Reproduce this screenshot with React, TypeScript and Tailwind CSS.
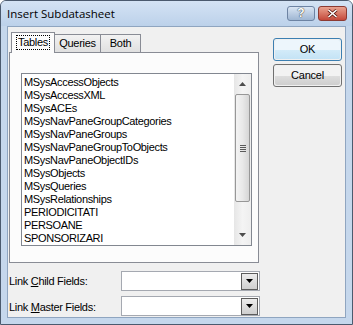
import React from "react";

const items = [
  "MSysAccessObjects",
  "MSysAccessXML",
  "MSysACEs",
  "MSysNavPaneGroupCategories",
  "MSysNavPaneGroups",
  "MSysNavPaneGroupToObjects",
  "MSysNavPaneObjectIDs",
  "MSysObjects",
  "MSysQueries",
  "MSysRelationships",
  "PERIODICITATI",
  "PERSOANE",
  "SPONSORIZARI",
];

function DropBtn() {
  return (
    <div className="w-[17px] h-[17px] border border-[#5c5c5c] bg-gradient-to-b from-[#ececec] to-[#cfcfcf] flex items-center justify-center">
      <svg width="7" height="4" viewBox="0 0 7 4">
        <path d="M0 0h7L3.5 4z" fill="#000" />
      </svg>
    </div>
  );
}

function Combo() {
  return (
    <div className="w-[139px] h-[20px] bg-white border border-[#a5a9b1] flex items-center justify-end pr-[1px]">
      <DropBtn />
    </div>
  );
}

function VButton({ label, def }: { label: string; def?: boolean }) {
  return (
    <div
      className={`w-[69px] h-[23px] rounded-[3px] border ${
        def ? "border-[#3c7fb1]" : "border-[#707070]"
      } p-[1px]`}
    >
      <div
        className={`w-full h-full rounded-[2px] flex flex-col overflow-hidden ${
          def ? "shadow-[inset_0_0_0_1px_#c8e8f8]" : "shadow-[inset_0_0_0_1px_#fcfcfc]"
        } relative`}
      >
        <div className={`h-1/2 ${def ? "bg-[#edf6fc]" : "bg-[#f2f2f2]"}`} />
        <div className={`h-1/2 ${def ? "bg-gradient-to-b from-[#d3ebf9] to-[#c4e3f5]" : "bg-gradient-to-b from-[#dddddd] to-[#cfcfcf]"}`} />
        <div className="absolute inset-0 flex items-center justify-center text-[11px] text-black tracking-[-0.2px]">
          {label}
        </div>
      </div>
    </div>
  );
}

export default function App() {
  return (
    <div
      className="w-[353px] h-[325px] bg-[#c5d7ec] border border-[#4b5a6e] rounded-t-[6px] flex flex-col overflow-hidden"
      style={{ fontFamily: "Tahoma, 'Liberation Sans', Arial, sans-serif" }}
    >
      {/* Title bar */}
      <div className="h-[25px] flex items-center pl-[6px] pr-[5px] bg-gradient-to-b from-[#d4e3f4] to-[#bcd1ea]">
        <span
          className="text-[11.5px] text-black flex-1 mt-[1px]"
          style={{ fontFamily: "'Open Sans', 'Liberation Sans', sans-serif" }}
        >
          Insert Subdatasheet
        </span>
        <div className="flex gap-[3px] -mt-[1px]">
          <div
            className="w-[28px] h-[15px] rounded-[3px] border border-[#6d83a3] bg-gradient-to-b from-[#d9e5f3] to-[#9fb6d3] flex items-center justify-center text-white text-[12px] font-bold leading-none"
            style={{ textShadow: "0 0 1px #333, 0 0 1px #333" }}
          >
            ?
          </div>
          <div className="w-[29px] h-[15px] rounded-[3px] border border-[#8c3a32] bg-gradient-to-b from-[#e8a290] to-[#c4473a] flex items-center justify-center">
            <svg width="11" height="9" viewBox="0 0 11 9">
              <path d="M1.5 1L9.5 8M9.5 1L1.5 8" stroke="#5a1a14" strokeWidth="3" />
              <path d="M1.5 1L9.5 8M9.5 1L1.5 8" stroke="#fff" strokeWidth="1.6" />
            </svg>
          </div>
        </div>
      </div>

      {/* Client */}
      <div className="flex-1 mx-[6px] mb-[6px] bg-[#f0f0f0] border border-[#8fa5c0] flex">
        {/* Left column */}
        <div className="w-[253px] flex flex-col pl-[1px] pt-[5px]">
          {/* Tabs */}
          <div className="flex items-end h-[20px] pl-[2px] relative z-10">
            <div className="w-[44px] border border-b-0 border-[#898c95] bg-[#fcfcfc] flex items-start justify-center pt-[2px] -mr-[1px] relative -mb-[1px] h-[21px]">
              <span className="text-[11px] text-black border border-dotted border-black px-[1px] leading-[13px] tracking-[-0.3px]">
                Tables
              </span>
            </div>
            <div className="h-[18px] w-[47px] border border-b-0 border-[#898c95] bg-gradient-to-b from-[#f2f2f2] to-[#e0e0e0] flex items-center justify-center text-[11px] text-black tracking-[-0.3px]">
              Queries
            </div>
            <div className="h-[18px] w-[40px] border border-b-0 border-l-0 border-[#898c95] bg-gradient-to-b from-[#f2f2f2] to-[#e0e0e0] flex items-center justify-center text-[11px] text-black tracking-[-0.3px]">
              Both
            </div>
          </div>
          {/* Panel */}
          <div className="w-[250px] h-[211px] border border-[#898c95] bg-[#fcfcfc] pl-[11px] pt-[20px]">
            <div className="w-[231px] h-[173px] border border-[#828790] bg-white flex">
              <div className="flex-1 pt-[2px] pl-[2px] overflow-hidden">
                {items.map((t) => (
                  <div
                    key={t}
                    className="h-[13px] leading-[13px] text-[11px] text-black whitespace-nowrap tracking-[-0.35px]"
                  >
                    {t}
                  </div>
                ))}
              </div>
              {/* Scrollbar */}
              <div className="w-[17px] h-full bg-gradient-to-r from-[#e6e6e6] via-[#f4f4f4] to-[#eeeeee] flex flex-col items-center">
                <div className="h-[20px] w-full flex items-center justify-center">
                  <svg width="7" height="4" viewBox="0 0 7 4">
                    <path d="M0 4h7L3.5 0z" fill="#4d4d4d" />
                  </svg>
                </div>
                <div className="w-[15px] h-[108px] rounded-[2px] border border-[#979797] bg-gradient-to-r from-[#f3f3f3] via-[#e9e9e9] to-[#d6d6d6] flex items-center justify-center">
                  <div className="flex flex-col gap-[1px]">
                    <div className="w-[6px] h-[1px] bg-[#5a5a5a]" />
                    <div className="w-[6px] h-[1px] bg-[#5a5a5a]" />
                    <div className="w-[6px] h-[1px] bg-[#5a5a5a]" />
                    <div className="w-[6px] h-[1px] bg-[#5a5a5a]" />
                  </div>
                </div>
                <div className="flex-1" />
                <div className="h-[20px] w-full flex items-center justify-center">
                  <svg width="7" height="4" viewBox="0 0 7 4">
                    <path d="M0 0h7L3.5 4z" fill="#4d4d4d" />
                  </svg>
                </div>
              </div>
            </div>
          </div>
          {/* Fields */}
          <div className="flex flex-col gap-[5px] mt-[8px]">
            <div className="flex items-center">
              <span className="w-[112px] text-[11px] text-black tracking-[-0.3px] mt-[1px]">
                Link <span className="underline">C</span>hild Fields:
              </span>
              <Combo />
            </div>
            <div className="flex items-center">
              <span className="w-[112px] text-[11px] text-black tracking-[-0.3px] mt-[2px]">
                Link <span className="underline">M</span>aster Fields:
              </span>
              <Combo />
            </div>
          </div>
        </div>
        {/* Right column */}
        <div className="flex flex-col gap-[3px] pl-[12px] pt-[11px]">
          <VButton label="OK" def />
          <VButton label="Cancel" />
        </div>
      </div>
    </div>
  );
}
